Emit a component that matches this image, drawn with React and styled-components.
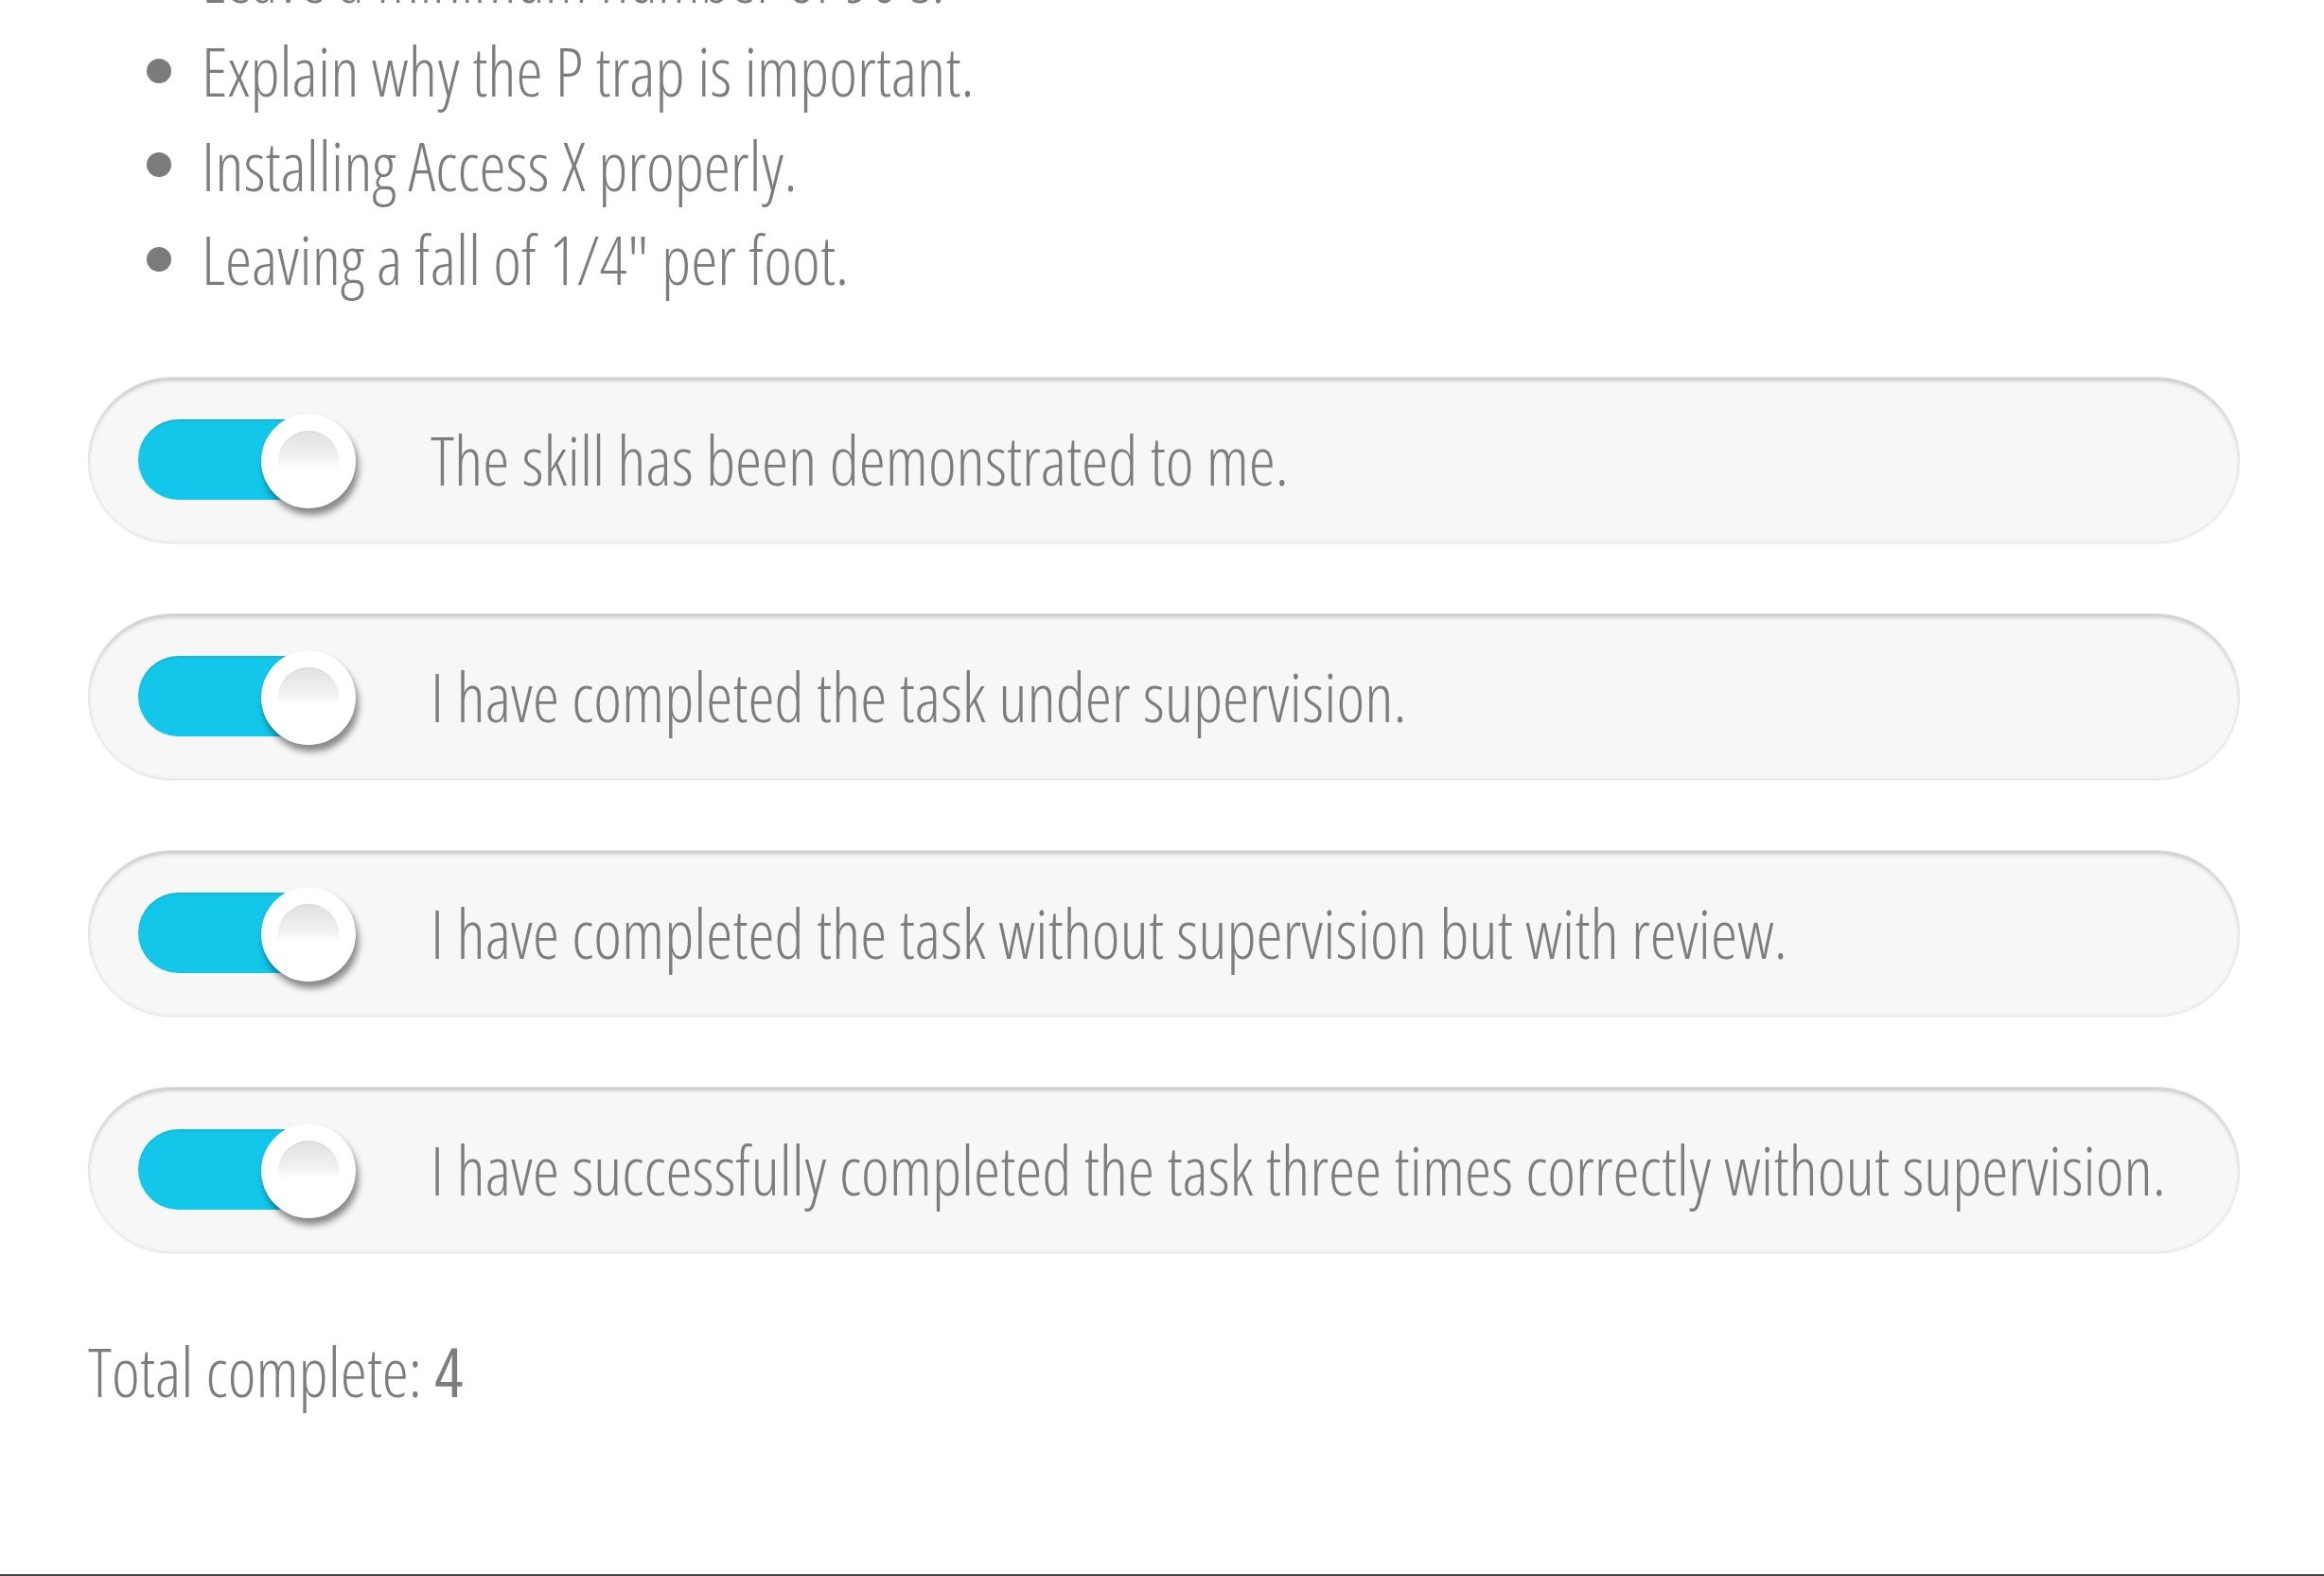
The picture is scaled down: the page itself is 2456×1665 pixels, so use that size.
import React from "react";
import styled, { createGlobalStyle } from "styled-components";

const GlobalStyle = createGlobalStyle`
  html, body {
    margin: 0;
    padding: 0;
    background: #ffffff;
  }
  body {
    font-family: "Open Sans", "Liberation Sans", sans-serif;
    font-weight: 300;
    font-stretch: 75%;
    color: #7d7d7d;
    overflow: hidden;
  }
`;

const Page = styled.div`
  display: flex;
  flex-direction: column;
  margin-top: -74px;
  height: 1749px;
`;

const Main = styled.main`
  flex: 1;
  display: flex;
  flex-direction: column;
  padding: 0 89px 0 93px;
`;

const List = styled.ul`
  margin: 0;
  padding: 0 0 0 62px;
  list-style: none;
`;

const Item = styled.li`
  display: flex;
  align-items: center;
  gap: 32px;
  font-size: 71px;
  line-height: 1.4;
  white-space: nowrap;

  &::before {
    content: "";
    flex: none;
    width: 26px;
    height: 26px;
    border-radius: 50%;
    background: #7b7b7b;
  }
`;

const Stack = styled.div`
  display: flex;
  flex-direction: column;
  gap: 74px;
  margin-top: 74px;
`;

const Pill = styled.label`
  display: flex;
  align-items: center;
  height: 176px;
  box-sizing: border-box;
  padding-left: 52px;
  border-radius: 88px;
  background: #f7f7f7;
  border: 1px solid #e4e4e4;
  box-shadow: inset 0 4px 4px -1px rgba(0, 0, 0, 0.2),
    inset 0 -2px 3px rgba(0, 0, 0, 0.03), 0 1px 2px rgba(0, 0, 0, 0.05);
`;

const Toggle = styled.span`
  position: relative;
  flex: none;
  width: 230px;
  height: 85px;
`;

const Track = styled.span`
  display: block;
  width: 200px;
  height: 100%;
  border-radius: 43px;
  background: ${(p) => (p.$on ? "#12c7ea" : "#d9d9d9")};
  box-shadow: inset 0 2px 2px rgba(0, 0, 0, 0.08);
`;

const Knob = styled.span`
  position: absolute;
  top: -6px;
  right: 0;
  width: 100px;
  height: 100px;
  border-radius: 50%;
  background: #ffffff;
  display: flex;
  align-items: center;
  justify-content: center;
  box-shadow: 3px 7px 7px rgba(0, 0, 0, 0.45), 0 0 1px rgba(0, 0, 0, 0.12);
`;

const KnobCore = styled.span`
  width: 64px;
  height: 64px;
  border-radius: 50%;
  background: linear-gradient(180deg, #e1e1e1 0%, #f2f2f2 45%, #ffffff 62%, #ffffff 100%);
  box-shadow: inset 0 1px 2px rgba(0, 0, 0, 0.05);
`;

const Label = styled.span`
  margin-left: 79px;
  font-size: 71px;
  line-height: 1.4;
  white-space: nowrap;
`;

const Total = styled.p`
  margin: 75px 0 0;
  font-size: 71px;
  line-height: 1.4;
`;

const Count = styled.strong`
  font-weight: 500;
`;

const Footer = styled.footer`
  height: 10px;
  border-top: 2px solid #444444;
`;

const items = [
  "Leave a minimum number of 90's.",
  "Explain why the P trap is important.",
  "Installing Access X properly.",
  'Leaving a fall of 1/4" per foot.',
];

const skills = [
  "The skill has been demonstrated to me.",
  "I have completed the task under supervision.",
  "I have completed the task without supervision but with review.",
  "I have successfully completed the task three times correctly without supervision.",
];

export default function App() {
  const checked = skills.map(() => true);
  const total = checked.filter(Boolean).length;
  return (
    <>
      <GlobalStyle />
      <Page>
        <Main>
          <List>
            {items.map((t) => (
              <Item key={t}>{t}</Item>
            ))}
          </List>
          <Stack>
            {skills.map((s, i) => (
              <Pill key={s}>
                <Toggle>
                  <Track $on={checked[i]} />
                  <Knob>
                    <KnobCore />
                  </Knob>
                </Toggle>
                <Label>{s}</Label>
              </Pill>
            ))}
          </Stack>
          <Total>
            Total complete: <Count>{total}</Count>
          </Total>
        </Main>
        <Footer />
      </Page>
    </>
  );
}
